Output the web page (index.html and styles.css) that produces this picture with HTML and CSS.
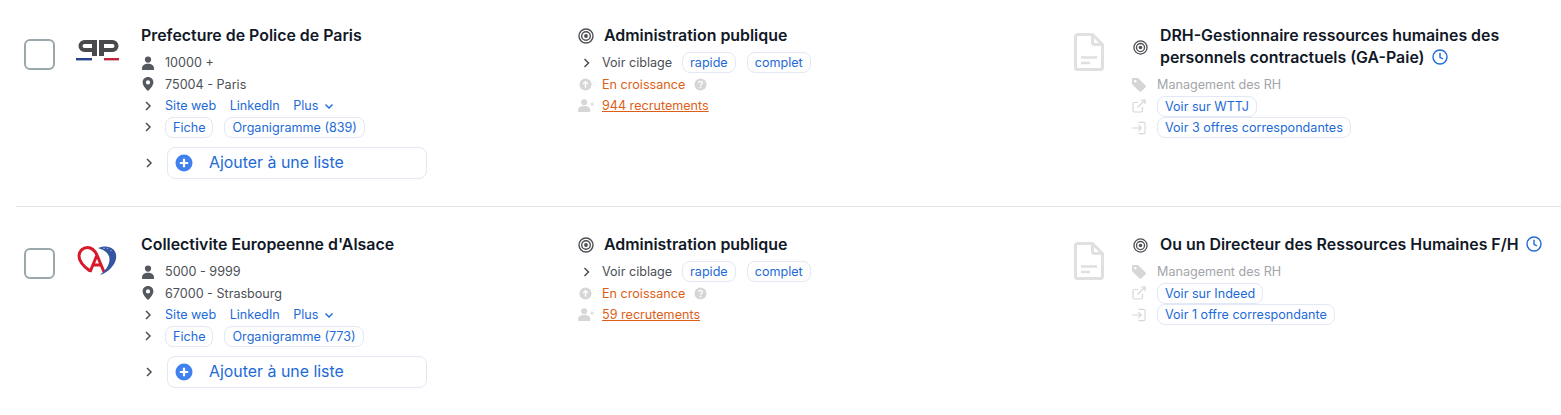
FILE: index.html
```html
<!DOCTYPE html>
<html lang="fr">
<head>
  <meta charset="UTF-8">
  <meta name="viewport" content="width=device-width, initial-scale=1.0">
  <title>Comptes</title>
  <link rel="stylesheet" href="styles.css">
</head>
<body>

  <svg class="sprites" width="0" height="0">
    <symbol id="i-user" viewBox="0 0 14 14"><circle cx="7" cy="3.6" r="3.1" fill="currentColor"/><path d="M1 14v-1.6C1 9.6 3.4 7.8 7 7.8s6 1.8 6 4.6V14z" fill="currentColor"/></symbol>
    <symbol id="i-pin" viewBox="0 0 14 14"><path fill-rule="evenodd" d="M7 0C3.8 0 1.6 2.3 1.6 5.3 1.6 8.6 5 12.4 7 14c2-1.6 5.4-5.4 5.4-8.700C12.4 2.3 10.2 0 7 0zm0 3.3a2.1 2.1 0 1 1 0 4.2 2.1 2.1 0 0 1 0-4.2z" fill="currentColor"/></symbol>
    <symbol id="i-chevron" viewBox="0 0 10 10"><path d="M3 1l4 4-4 4" fill="none" stroke="currentColor" stroke-width="1.5"/></symbol>
    <symbol id="i-down" viewBox="0 0 10 10"><path d="M1.5 3.5L5 7l3.5-3.5" fill="none" stroke="currentColor" stroke-width="1.4"/></symbol>
    <symbol id="i-plus" viewBox="0 0 18 18"><circle cx="9" cy="9" r="8.5" fill="currentColor"/><path d="M9 4.8v8.4M4.8 9h8.4" stroke="#fff" stroke-width="2.2"/></symbol>
    <symbol id="i-target" viewBox="0 0 16 16"><g fill="none" stroke="currentColor"><circle cx="8" cy="8" r="7" stroke-width="1.4"/><circle cx="8" cy="8" r="4.3" stroke-width="1.4"/></g><circle cx="8" cy="8" r="1.9" fill="currentColor"/></symbol>
    <symbol id="i-up" viewBox="0 0 14 14"><circle cx="7" cy="7" r="6.5" fill="currentColor"/><path d="M7 10.5V4M4.4 6.5L7 3.9l2.6 2.6" fill="none" stroke="#fff" stroke-width="1.5"/></symbol>
    <symbol id="i-help" viewBox="0 0 14 14"><circle cx="7" cy="7" r="6.5" fill="currentColor"/><path d="M5 5.4C5 4.2 5.9 3.6 7 3.6s2 .7 2 1.7c0 1.5-2 1.4-2 3" fill="none" stroke="#fff" stroke-width="1.4"/><circle cx="7" cy="10.3" r=".9" fill="#fff"/></symbol>
    <symbol id="i-useradd" viewBox="0 0 18 14"><circle cx="6.5" cy="3.4" r="3.2" fill="currentColor"/><path d="M0 14v-2.2C0 9 2.6 7.6 6.5 7.6s6.5 1.4 6.5 4.2V14z" fill="currentColor"/><path d="M15 3.5v4M13 5.500h4" stroke="currentColor" stroke-width="1"/></symbol>
    <symbol id="i-doc" viewBox="0 0 30 38"><g fill="none" stroke="currentColor" stroke-width="3" stroke-linejoin="round"><path d="M1.500 3.500a2 2 0 0 1 2-2h15l10 10v23a2 2 0 0 1-2 2h-23a2 2 0 0 1-2-2z"/><path d="M18.500 1.500v8a2 2 0 0 0 2 2h8"/></g><path d="M7 24.500h16M7 30h9" fill="none" stroke="currentColor" stroke-width="2.4"/></symbol>
    <symbol id="i-clock" viewBox="0 0 16 16"><circle cx="8" cy="8" r="7" fill="none" stroke="currentColor" stroke-width="1.4"/><path d="M8 3.800V8.300l3 1.700" fill="none" stroke="currentColor" stroke-width="1.4"/></symbol>
    <symbol id="i-tag" viewBox="0 0 14 14"><path fill-rule="evenodd" d="M0 1.200C0 .5.500 0 1.200 0h4.300c.4 0 .7.100 1 .4l7.100 7.100c.5.500.5 1.200 0 1.700l-4.400 4.400c-.5.500-1.200.5-1.700 0L.4 6.500C.1 6.200 0 5.900 0 5.500zM3.300 2a1.300 1.300 0 1 0 0 2.600 1.300 1.300 0 0 0 0-2.600z" fill="currentColor"/></symbol>
    <symbol id="i-external" viewBox="0 0 14 14"><path d="M10.500 8v3.500a1.500 1.500 0 0 1-1.500 1.500H2.500A1.500 1.500 0 0 1 1 11.500V5a1.500 1.500 0 0 1 1.500-1.500H6M5.500 8.500L13 1M8.800 1H13v4.200" fill="none" stroke="currentColor" stroke-width="1.200"/></symbol>
    <symbol id="i-login" viewBox="0 0 15 14"><path d="M7 1h5.500A1.500 1.500 0 0 1 14 2.500v9a1.500 1.500 0 0 1-1.500 1.500H7M0 7h9.500M6.800 4l3 3-3 3" fill="none" stroke="currentColor" stroke-width="1.200"/></symbol>
  </svg>

  <div class="row">
    <div class="check"></div>
    <div class="logo">
      <svg width="44" height="30" viewBox="0 0 44 30">
        <g fill="none" stroke="#4a4a4c">
          <path d="M19 5H8.500a4 4 0 0 0 0 8H19M26 5h10.500a4 4 0 0 1 0 8H26" stroke-width="4"/>
          <path d="M18.500 3v16M25.500 3v16" stroke-width="5"/>
        </g>
        <rect x="0" y="21" width="16" height="2.400" fill="#24418a"/>
        <rect x="28" y="21" width="15" height="2.400" fill="#c0233c"/>
      </svg>
    </div>
    <div class="col">
      <h3 class="title">Prefecture de Police de Paris</h3>
      <div class="line"><svg class="ico dark"><use href="#i-user"/></svg>10000 +</div>
      <div class="line"><svg class="ico dark"><use href="#i-pin"/></svg>75004 - Paris</div>
      <div class="line"><svg class="ico chev"><use href="#i-chevron"/></svg><a class="link">Site web</a><a class="link">LinkedIn</a><a class="link">Plus <svg class="down"><use href="#i-down"/></svg></a></div>
      <div class="line"><svg class="ico chev"><use href="#i-chevron"/></svg><a class="chip">Fiche</a><a class="chip">Organigramme (839)</a></div>
      <div class="add-line"><svg class="ico chev"><use href="#i-chevron"/></svg><a class="add"><svg class="plus"><use href="#i-plus"/></svg>Ajouter à une liste</a></div>
    </div>
    <div class="col">
      <h3 class="title"><svg class="target"><use href="#i-target"/></svg>Administration publique</h3>
      <div class="line mid"><svg class="ico chev"><use href="#i-chevron"/></svg><span class="lead">Voir ciblage</span><a class="chip">rapide</a><a class="chip">complet</a></div>
      <div class="line mid orange"><svg class="ico grey"><use href="#i-up"/></svg>En croissance<svg class="help"><use href="#i-help"/></svg></div>
      <div class="line mid orange"><svg class="ico grey wide"><use href="#i-useradd"/></svg><u>944 recrutements</u></div>
    </div>
    <svg class="doc"><use href="#i-doc"/></svg>
    <div class="col">
      <h3 class="title"><svg class="target job"><use href="#i-target"/></svg><span>DRH-Gestionnaire ressources humaines des<br>personnels contractuels (GA-Paie) <svg class="clock"><use href="#i-clock"/></svg></span></h3>
      <div class="line job-line muted"><svg class="ico grey"><use href="#i-tag"/></svg>Management des RH</div>
      <div class="line job-line"><svg class="ico grey"><use href="#i-external"/></svg><a class="chip">Voir sur WTTJ</a></div>
      <div class="line job-line"><svg class="ico grey"><use href="#i-login"/></svg><a class="chip">Voir 3 offres correspondantes</a></div>
    </div>
  </div>

  <div class="row second">
    <div class="check"></div>
    <div class="logo">
      <svg width="44" height="30" viewBox="0 0 44 30">
        <path d="M14 25C7 20 3 15 3 10 3 5 7 1.500 11.500 1.500 16 1.500 19 5 21 9l7 17M14 26l7-17M16 19h10" fill="none" stroke="#d8192b" stroke-width="3"/>
        <path d="M22 2C27-.5 34 0 37.500 3.500 41 7 41 13 38 18 35 23 30 27 24 29 30 24 33.500 19 33.500 13 33.500 8 29 4 22 2z" fill="#34559f"/>
        <circle cx="28" cy="2.400" r=".8" fill="#8fa5d2"/>
        <circle cx="31.500" cy="2.600" r=".8" fill="#8fa5d2"/>
        <circle cx="35" cy="4.500" r=".8" fill="#8fa5d2"/>
      </svg>
    </div>
    <div class="col">
      <h3 class="title">Collectivite Europeenne d'Alsace</h3>
      <div class="line"><svg class="ico dark"><use href="#i-user"/></svg>5000 - 9999</div>
      <div class="line"><svg class="ico dark"><use href="#i-pin"/></svg>67000 - Strasbourg</div>
      <div class="line"><svg class="ico chev"><use href="#i-chevron"/></svg><a class="link">Site web</a><a class="link">LinkedIn</a><a class="link">Plus <svg class="down"><use href="#i-down"/></svg></a></div>
      <div class="line"><svg class="ico chev"><use href="#i-chevron"/></svg><a class="chip">Fiche</a><a class="chip">Organigramme (773)</a></div>
      <div class="add-line"><svg class="ico chev"><use href="#i-chevron"/></svg><a class="add"><svg class="plus"><use href="#i-plus"/></svg>Ajouter à une liste</a></div>
    </div>
    <div class="col">
      <h3 class="title"><svg class="target"><use href="#i-target"/></svg>Administration publique</h3>
      <div class="line mid"><svg class="ico chev"><use href="#i-chevron"/></svg><span class="lead">Voir ciblage</span><a class="chip">rapide</a><a class="chip">complet</a></div>
      <div class="line mid orange"><svg class="ico grey"><use href="#i-up"/></svg>En croissance<svg class="help"><use href="#i-help"/></svg></div>
      <div class="line mid orange"><svg class="ico grey wide"><use href="#i-useradd"/></svg><u>59 recrutements</u></div>
    </div>
    <svg class="doc"><use href="#i-doc"/></svg>
    <div class="col">
      <h3 class="title"><svg class="target job"><use href="#i-target"/></svg><span class="nowrap">Ou un Directeur des Ressources Humaines F/H <svg class="clock"><use href="#i-clock"/></svg></span></h3>
      <div class="line job-line muted"><svg class="ico grey"><use href="#i-tag"/></svg>Management des RH</div>
      <div class="line job-line"><svg class="ico grey"><use href="#i-external"/></svg><a class="chip">Voir sur Indeed</a></div>
      <div class="line job-line"><svg class="ico grey"><use href="#i-login"/></svg><a class="chip">Voir 1 offre correspondante</a></div>
    </div>
  </div>

</body>
</html>
```

FILE: styles.css
```css
body {
  font-family: 'Inter', sans-serif;
  background: #fff;
  margin: 0;
  color: #4b4f56;
  font-size: 12.6px;
  overflow: hidden;
}

.sprites {
  display: block;
}

.row {
  display: grid;
  grid-template-columns: 52px 65px 437px 496px 58px 1fr;
  margin-left: 16px;
  padding: 25px 0 27px 8px;
  height: 207px;
  box-sizing: border-box;
  border-bottom: 1px solid #e4e4e4;
}

.row.second {
  padding-top: 27px;
  height: auto;
  border-bottom: none;
}

.check {
  width: 31px;
  height: 31px;
  margin-top: 14px;
  box-sizing: border-box;
  border: 2px solid #9aa8ab;
  border-radius: 6px;
}

.logo {
  margin-top: 12px;
  height: 30px;
}

.logo svg {
  display: block;
}

.title {
  display: flex;
  align-items: center;
  margin: 0 0 5px;
  font-size: 15.9px;
  font-weight: 600;
  line-height: 22px;
  color: #111827;
}

.nowrap {
  white-space: nowrap;
}

.line {
  display: flex;
  align-items: center;
  height: 21.5px;
  white-space: nowrap;
}

.ico {
  flex: none;
  width: 12px;
  height: 12px;
  margin: 0 12px 0 2px;
}

.dark {
  color: #55585f;
  width: 14px;
  height: 14px;
  margin: 0 10px 0 0;
}

.chev {
  color: #4b4f56;
  width: 10px;
  height: 10px;
  margin: 0 12px 0 2px;
}

.grey {
  color: #d6d6d8;
}

.link {
  color: #1d6ad8;
  margin-right: 13.5px;
}

.down {
  width: 10px;
  height: 10px;
  margin-left: 2px;
  vertical-align: -1px;
}

.chip {
  color: #1d6ad8;
  height: 21px;
  line-height: 19px;
  box-sizing: border-box;
  padding: 0 7px;
  margin-right: 11px;
  border: 1px solid #e2e8f5;
  border-radius: 8px;
}

.add-line {
  display: flex;
  align-items: center;
  margin-top: 8.5px;
}

.add-line .chev {
  margin: 0 13px 0 3px;
}

.add {
  display: flex;
  align-items: center;
  width: 260px;
  height: 32px;
  box-sizing: border-box;
  padding-left: 7px;
  border: 1px solid #e2e8f5;
  border-radius: 8px;
  color: #1d6ad8;
  font-size: 15.9px;
}

.plus {
  color: #3f82ee;
  width: 18px;
  height: 18px;
  margin-right: 16px;
}

.target {
  color: #4d4f55;
  width: 16px;
  height: 16px;
  margin-right: 10px;
  flex: none;
}

.target.job {
  margin: 0 12px 0 1px;
  width: 15px;
  height: 15px;
}

.mid .ico {
  margin: 0 9px 0 2px;
  width: 13px;
}

.mid.orange {
  color: #dd5f17;
}

.mid.orange .ico {
  margin: 0 10px 0 1px;
  width: 13px;
  height: 13px;
}

.mid.orange .ico.wide {
  width: 17px;
  margin: 0 7px 0 0;
}

.lead {
  margin-right: 10px;
}

.help {
  width: 13px;
  height: 13px;
  margin-left: 9px;
  color: #d6d6d8;
}

.doc {
  width: 30px;
  height: 38px;
  margin-top: 8px;
  color: #e0e0e0;
}

.clock {
  color: #1d6ad8;
  width: 16px;
  height: 16px;
  margin-left: 3px;
  vertical-align: -2px;
}

.job-line .ico {
  width: 14px;
  height: 14px;
  margin: 0 11px 0 0;
}

.muted {
  color: #a3a5ab;
}
```
